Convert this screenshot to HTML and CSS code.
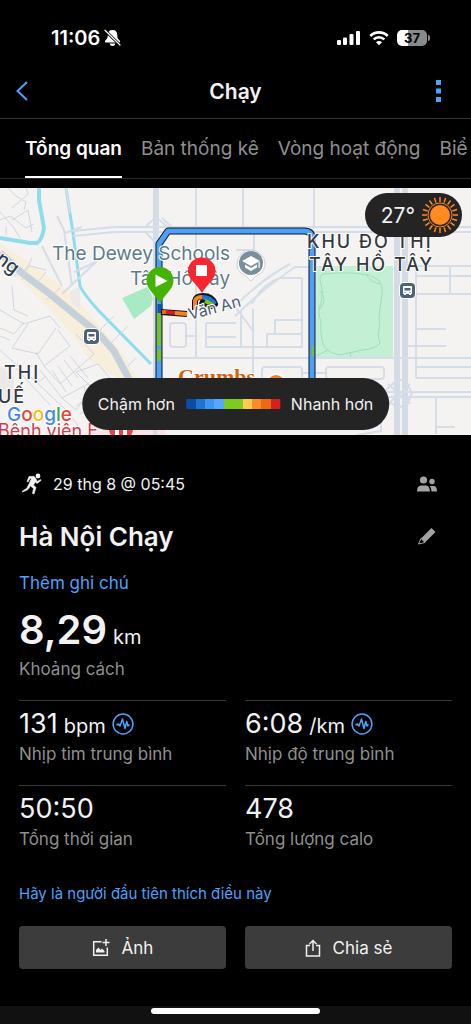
FILE: index.html
```html
<!DOCTYPE html>
<html lang="vi">
<head>
  <meta charset="UTF-8" />
  <meta name="viewport" content="width=device-width, initial-scale=1.0"/>
  <title>Chạy</title>
  <link rel="stylesheet" href="styles.css">
</head>
<body>

  <div class="statusbar">
    <div class="status-left">
      <span class="clock">11:06</span>
      <svg width="17" height="18" viewBox="0 0 17 18">
        <path d="M8.500 1c-3 0-4.700 2-4.700 4.600 0 4-1.300 4.900-2.800 6.400v1.400h15V12c-1.500-1.500-2.800-2.400-2.800-6.400C13.200 3 11.500 1 8.500 1z" fill="#fff"/>
        <path d="M5.800 14.500h5.400a2.700 2.500 0 0 1-5.400 0z" fill="#fff"/>
        <path d="M1 1.500L16 16" stroke="#000" stroke-width="3"/>
        <path d="M1 1.200L16 16" stroke="#fff" stroke-width="1.200" stroke-linecap="round"/>
      </svg>
    </div>
    <div class="status-right">
      <svg width="24" height="16" viewBox="0 0 24 16" fill="#fff">
        <rect x="0" y="10" width="4" height="5" rx="1"/>
        <rect x="6" y="7.500" width="4" height="7.500" rx="1"/>
        <rect x="12.500" y="4" width="4" height="11" rx="1"/>
        <rect x="19" y="1" width="4" height="14" rx="1"/>
      </svg>
      <svg width="20" height="16" viewBox="0 0 20 16" fill="none" stroke="#fff" stroke-width="2.600">
        <path d="M1.300 6a12.300 12.300 0 0 1 17.400 0"/>
        <path d="M4.700 9.400a7.500 7.500 0 0 1 10.600 0"/>
        <path d="M10 15.200L7 12.200a4.200 4.200 0 0 1 6 0z" fill="#fff" stroke="none"/>
      </svg>
      <span class="battery">37</span>
    </div>
  </div>

  <header class="topbar">
    <button class="icon-btn" aria-label="Quay lại">
      <svg width="12" height="20" viewBox="0 0 12 20" fill="none" stroke="#4ba3fb" stroke-width="2"><path d="M11 1L1.500 10L11 19"/></svg>
    </button>
    <h1>Chạy</h1>
    <button class="icon-btn" aria-label="Thêm">
      <svg width="5" height="22" viewBox="0 0 5 22" fill="#4ba3fb"><path d="M0 0h5v5H0zM0 8.500h5v5H0zM0 17h5v5H0z"/></svg>
    </button>
  </header>

  <nav class="tabs">
    <a href="#" class="active">Tổng quan</a>
    <a href="#">Bản thống kê</a>
    <a href="#">Vòng hoạt động</a>
    <a href="#">Biể</a>
  </nav>

  <div class="map">
    <svg class="map-canvas" viewBox="0 0 471 247" preserveAspectRatio="xMidYMid slice">
      <rect width="471" height="247" fill="#f5f3f2"/>

      <!-- built-up strip along the main road -->
      <path d="M0 55L28 74L60 97L80 115L96 134L122 164L137 190L130 196L112 187L90 172L72 146L50 122L20 92L0 78z" fill="#f7eedb"/>
      <path d="M70 103l10 -4v22l-8-6zM0 178l14 10v26H0z" fill="#ece9e8"/>
      <path d="M95 230l20-8 50 5v20H85z" fill="#f9e4e3"/>

      <!-- parks -->
      <path d="M316 78h77v91h-77z" fill="#c3f0d5"/>
      <path d="M122 110L147 99L153 110L151 118L134 131z" fill="#a8eac6"/>
      <g fill="none" stroke="#9fdcb9" stroke-width="1">
        <path d="M323 86q-5 2-2 10t0 18q-4 10 0 20q-1 15 3 24q5 7 16 9l22-5q14-1 18-7l-2-8q3-8 1-18l3-24q1-10-5-14l-8-4q-16-3-32-2z"/>
        <path d="M366 86q4 8 14 10M316 168l12-6M350 164l1 5M320 103q8 8 0 18"/>
      </g>

      <!-- water -->
      <g fill="none" stroke="#8fdcee" stroke-width="4">
        <path d="M39 0L39 12L44 40Q42 52 37 55L30 55L0 50"/>
        <path d="M66 0L73 45L80 98Q83 105 98 122L151 176" stroke-width="3"/>
      </g>

      <!-- wide roads -->
      <g fill="none" stroke="#d3dbe5">
        <path d="M155 0v247" stroke-width="4"/>
        <path d="M397 0v247M405 0v247" stroke-width="6"/>
        <path d="M0 65L22 85L50 106L73 125L98 145L114 163L129 191" stroke-width="7" stroke="#c6d0da"/>
      </g>
      <g fill="none" stroke="#d5dde8" stroke-width="2">
        <path d="M158 0v110M73 43L115 39H471M73 48L115 44H471"/>
        <path d="M196 0v46M243 0v40M314 0v40M254 42v20h-18M196 44v126"/>
        <path d="M145 39L156 29L170 41M145 44L156 55M162 30l10 9"/>
        <path d="M57 28L64 42L72 98M65 45L82 39M66 0L70 25M62 106l36-34M42 58L62 98M74 84l22-10"/>
        <path d="M235 128Q264 100 295 79H314M235 118Q262 91 290 76M302 90V159H235M302 90H280Q262 96 252 116M236 120L254 144M253 121v68M267 159V146h35M275 145V132h27M241 159V122"/>
        <path d="M160 170H471M170 138q0-3 3-3h10q3 0 3 3v18q0 3-3 3h-10q-3 0-3-3zM186 148h10M206 135h30M206 135v24h36M206 149h30"/>
        <path d="M262 190v-8q0-3 3-3h35q2 0 2 3v20M302 185h24M326 191v-9q0-3 3-3h52q3 0 3 3v6q0 3-3 3h-52q-3 0-3-3"/>
        <path d="M415 78H471M416 88H471M416 106H471M450 78v28M416 78v112M416 141h30M408 158h38M416 190h55M416 179h55"/>
        <path d="M385 203L397 192h8L412 205L408 214L399 220L385 211zM380 204h91M380 209h91M388 196l22 20M410 196l-22 20M436 210v36M436 239h19M355 242v-10M381 231v12l-24 4"/>
      </g>

      <!-- old quarter lanes -->
      <g fill="none" stroke="#ced6e2" stroke-width="1">
        <path d="M8 0L16 8L26 14L24 22M0 32L10 28L26 40L34 36M6 38L6 48M0 24L14 40L20 50M12 32L28 22L32 44M26 0l2 6L12 20"/>
        <path d="M14 88L30 78L46 82M22 92L32 70M36 96L46 84M60 100L46 112M0 122L24 136L50 128L60 140M12 98L14 122L28 128M28 136L12 160L38 166L56 140M0 140L14 146L24 134M0 148L10 152"/>
        <path d="M36 164L44 178L70 158L58 142M44 178L60 196L94 166L76 146M40 182L62 210L88 196L76 184L98 176M52 182l14 22M58 178l14 20M64 172l14 18M70 168l18 22M62 210l14 12L82 214M98 176L110 190M84 198l4 22M88 196l12 4-6 16"/>
        <path d="M0 162L20 180L32 190L66 222L80 240M14 178L50 217M36 196l10-8M76 218L98 204M80 226l22-14M96 146L114 128M110 156L128 138M124 182l12-12"/>
      </g>

      <!-- route -->
      <g fill="none" stroke-linejoin="round">
        <path d="M159 195V56L168 43H304Q312 43 312 50V195" stroke="#10151c" stroke-width="7"/>
        <path d="M159 195V56L168 43H304Q312 43 312 50V195" stroke="#4ba0fb" stroke-width="5"/>
        <path d="M159 125v48" stroke="#7bc31c" stroke-width="4"/>
        <path d="M159 158v3" stroke="#4ba0fb" stroke-width="4"/>
        <path d="M160 116v9" stroke="#0c55a8" stroke-width="5"/>
        <path d="M313 158v10" stroke="#7bc31c" stroke-width="2"/>
        <path d="M161 124L187 126" stroke="#10151c" stroke-width="6"/>
        <path d="M162 124L168 124" stroke="#ed6a0c" stroke-width="4"/>
        <path d="M166 124L176 125" stroke="#d5201f" stroke-width="4"/>
        <path d="M175 125L187 126" stroke="#f7821f" stroke-width="4"/>
        <path d="M195 122V113Q196 108 203 108Q212 108 215 116L211 118L200 113" stroke="#10151c" stroke-width="6"/>
        <path d="M195 122V113Q196 109 202 109" stroke="#f7821f" stroke-width="4"/>
        <path d="M202 109Q211 109 215 116" stroke="#1e76d2" stroke-width="4"/>
        <path d="M213 117L205 113" stroke="#7bc31c" stroke-width="4"/>
      </g>

      <!-- labels -->
      <g class="map-label poi">
        <text x="52" y="72">The Dewey Schools</text>
        <text x="130" y="97">Tây Hồ Tây</text>
      </g>
      <text class="map-label street" transform="translate(190 132) rotate(-15)">Văn An</text>
      <g class="map-label district">
        <text x="307" y="60">KHU ĐÔ THỊ</text>
        <text x="309" y="83">TÂY HỒ TÂY</text>
        <text x="4" y="191">THỊ</text>
        <text x="-2" y="215">UẾ</text>
      </g>
      <text class="map-label street big" transform="translate(-5 73) rotate(38)">ng</text>
      <text class="map-label shop" x="178" y="196">Crumbs</text>
      <text class="map-label hospital" x="-2" y="249">Bệnh viện E</text>
      <circle cx="276" cy="196" r="11" fill="#fff"/>
      <circle cx="276" cy="196" r="9" fill="#f5821f"/>
      <circle cx="121" cy="241" r="13" fill="#fff"/>
      <circle cx="121" cy="241" r="12" fill="#f43c4b"/>
      <path d="M115 236h4v11h-4zM123 236h4v11h-4z" fill="#fff"/>
      <text class="google" x="7" y="233"><tspan fill="#4285f4">G</tspan><tspan fill="#ea4335">o</tspan><tspan fill="#fbbc05">o</tspan><tspan fill="#4285f4">g</tspan><tspan fill="#34a853">l</tspan><tspan fill="#ea4335">e</tspan></text>

      <!-- school pin -->
      <path d="M251 62a14 14 0 0 1 14 14c0 7-5 10-9 12l-5 5-5-5c-4-2-9-5-9-12a14 14 0 0 1 14-14z" fill="#fff" stroke="#d0d0d0" stroke-width="1"/>
      <circle cx="251" cy="75" r="12" fill="#78909c"/>
      <path d="M251 68l9 5-9 5-9-5zM245 76.500l6 3.500 6-3.500v3l-6 3.500-6-3.500zM258.500 74h1.200v6h-1.200z" fill="#fff"/>

      <!-- bus stops -->
      <g id="bus">
        <rect x="83" y="140" width="17" height="17" rx="5" fill="#fff"/>
        <rect x="84" y="141" width="15" height="15" rx="4" fill="#4d6379"/>
        <path d="M88 144h7q1 0 1 1v7h-1v1h-2v-1h-3v1h-2v-1h-1v-7q0-1 1-1z" fill="#fff"/>
        <path d="M88.500 146h6v2.500h-6zM88.500 150h1v1h-1zM93.500 150h1v1h-1z" fill="#4d6379"/>
      </g>
      <use href="#bus" x="316" y="-46"/>

      <!-- start and finish pins -->
      <path d="M160 79a13.500 13.500 0 0 1 13.500 13.500C173.500 101 166 105 160 115C154 105 146.500 101 146.500 92.500A13.500 13.500 0 0 1 160 79z" fill="#44b306"/>
      <path d="M155.500 86.500L167.500 93L155.500 99z" fill="#fff"/>
      <path d="M202 69.500a13.500 13.500 0 0 1 13.500 13.500C215.500 91 208 95 202 105C196 95 188 91 188 83A13.500 13.500 0 0 1 202 69.500z" fill="#fb2530"/>
      <path d="M196 77h11v11h-11z" fill="#fff"/>
    </svg>

    <div class="weather">
      <span>27°</span>
      <svg width="38" height="38" viewBox="-19 -19 38 38">
        <g id="rays" stroke="#ff8a1f" stroke-width="1.500">
          <path id="ray" d="M0-13V-18"/>
          <use href="#ray" transform="rotate(18)"/>
          <use href="#ray" transform="rotate(36)"/>
          <use href="#ray" transform="rotate(54)"/>
          <use href="#ray" transform="rotate(72)"/>
        </g>
        <use href="#rays" transform="rotate(90)"/>
        <use href="#rays" transform="rotate(180)"/>
        <use href="#rays" transform="rotate(270)"/>
        <circle r="10" fill="#ff8a1f"/>
        <circle r="12" fill="none" stroke="#ff8a1f" stroke-width="1"/>
      </svg>
    </div>

    <div class="legend">
      <span>Chậm hơn</span>
      <div class="scale"></div>
      <span>Nhanh hơn</span>
    </div>
  </div>

  <main class="details">
    <div class="row meta">
      <svg width="22" height="22" viewBox="0 0 22 22">
        <circle cx="16" cy="3" r="2.400" fill="#f2f2f2"/>
        <path d="M7 3.500L12 3.300L13.500 5L15.300 8.500L18.500 6.500L19 7.500L15 10.500L13.300 9L11.500 12L14 14.500L12 21L10.500 20.500L11.500 15.500L8.200 12.800Q7.200 16 5.200 17L.500 19L.200 18.200L4.800 15.200L7.200 10.500L9.500 5.500H8L6 9L5 8.500z" fill="#f2f2f2" stroke="#f2f2f2" stroke-width=".6" stroke-linejoin="round"/>
      </svg>
      <span class="date">29 thg 8 @ 05:45</span>
      <button class="icon-btn" aria-label="Quyền riêng tư">
        <svg width="20" height="16" viewBox="0 0 20 16" fill="#a3a3a3">
          <circle cx="6.500" cy="4" r="3.600"/>
          <circle cx="15" cy="5.500" r="2.700"/>
          <path d="M0 15.500Q0 9.500 4 9.500H9Q12.500 9.500 13 15.500zM12.800 10h4Q20 10 20 15.500h-5.500Q14.500 12 12.800 10z"/>
        </svg>
      </button>
    </div>

    <div class="row title">
      <h2>Hà Nội Chạy</h2>
      <button class="icon-btn" aria-label="Sửa tên">
        <svg width="20" height="18" viewBox="0 0 20 18">
          <path d="M14.500 1L18.500 5L8 15.500L4 11.500z" fill="#a3a3a3"/>
          <path d="M4 11.500L8 15.500L1.500 17z" fill="none" stroke="#a3a3a3" stroke-width="1"/>
        </svg>
      </button>
    </div>

    <a href="#" class="note">Thêm ghi chú</a>

    <div class="distance">
      <div class="value">8,29 <small>km</small></div>
      <div class="label">Khoảng cách</div>
    </div>

    <div class="stats">
      <div class="stat">
        <div class="value">131 <small>bpm</small>
          <svg id="pulse" width="22" height="22" viewBox="0 0 22 22" fill="none" stroke="#4ba3fb">
            <circle cx="11" cy="11" r="9.900" stroke-width="1.500"/>
            <path d="M4.500 12L6.500 11L8 13L10.500 6L13 15.500L14.800 8.500L16 13L17.500 11.500" stroke-width="1.500" stroke-linejoin="round"/>
          </svg>
        </div>
        <div class="label">Nhịp tim trung bình</div>
      </div>
      <div class="stat">
        <div class="value">6:08 <small>/km</small>
          <svg width="22" height="22" viewBox="0 0 22 22"><use href="#pulse"/></svg>
        </div>
        <div class="label">Nhịp độ trung bình</div>
      </div>
      <div class="stat">
        <div class="value">50:50</div>
        <div class="label">Tổng thời gian</div>
      </div>
      <div class="stat">
        <div class="value">478</div>
        <div class="label">Tổng lượng calo</div>
      </div>
    </div>

    <a href="#" class="like">Hãy là người đầu tiên thích điều này</a>

    <div class="actions">
      <button>
        <svg width="18" height="18" viewBox="0 0 18 18" fill="none" stroke="#f0f0f0" stroke-width="1.500">
          <path d="M9.500 2.700H1.700V16.300H15.300V8.500M14 0V7M10.500 3.500H17.500"/>
          <path d="M4 13.500V11L6.500 8.500L8.500 11L10 9.500L12.500 12V13.500z" fill="#f0f0f0" stroke="none"/>
        </svg>
        Ảnh
      </button>
      <button>
        <svg width="16" height="18" viewBox="0 0 16 18" fill="none" stroke="#f0f0f0" stroke-width="1.500">
          <path d="M5 6.500H1.500V17H14.500V6.500H11M8 12V1.500M4.500 5L8 1.500L11.500 5"/>
        </svg>
        Chia sẻ
      </button>
    </div>
  </main>

  <div class="homebar"><span></span></div>

</body>
</html>
```
FILE: styles.css
```css
* {
  box-sizing: border-box;
}

body {
  font-family: Inter, "Liberation Sans", sans-serif;
  margin: 0;
  min-height: 100vh;
  display: flex;
  flex-direction: column;
  background-color: #000;
  color: #f2f2f2;
  overflow-x: hidden;
}

a {
  color: #4ba3fb;
  text-decoration: none;
}

button {
  font-family: inherit;
  color: inherit;
  border: none;
  cursor: pointer;
}

svg {
  flex: none;
}

.statusbar {
  display: flex;
  justify-content: space-between;
  align-items: center;
  padding: 12px 44px 0 51px;
  height: 64px;
}

.status-left, .status-right {
  display: flex;
  align-items: center;
}

.status-left {
  gap: 4px;
}

.status-right {
  gap: 8px;
}

.clock {
  font-size: 20px;
  font-weight: 600;
  color: #fff;
}

.battery {
  position: relative;
  width: 30px;
  height: 16px;
  border-radius: 5px;
  background: linear-gradient(to right, #fff 37%, #8a8a8a 37%);
  color: #000;
  font-size: 13px;
  font-weight: 700;
  line-height: 16px;
  text-align: center;
}

.battery::after {
  content: "";
  position: absolute;
  right: -3px;
  top: 5px;
  width: 2px;
  height: 6px;
  border-radius: 0 2px 2px 0;
  background-color: #8a8a8a;
}

.icon-btn {
  display: flex;
  background: none;
  padding: 0;
}

.topbar {
  display: grid;
  grid-template-columns: 1fr auto 1fr;
  align-items: center;
  height: 54px;
  padding: 0 16px;
}

.topbar h1 {
  margin: 0;
  font-size: 21px;
  font-weight: 600;
}

.topbar .icon-btn:last-child {
  justify-self: end;
  padding-right: 14px;
}

.tabs {
  display: flex;
  gap: 19px;
  height: 61px;
  padding-left: 25px;
  border-top: 1px solid #333;
  border-bottom: 1px solid #2b2b2b;
  overflow: hidden;
  white-space: nowrap;
}

.tabs a {
  flex: none;
  color: #8f8f8f;
  font-size: 19px;
  line-height: 59px;
}

.tabs .active {
  color: #fff;
  font-weight: 600;
  box-shadow: inset 0 -2px #fff;
}

.map {
  position: relative;
  margin-top: 9px;
}

.map-canvas {
  display: block;
  width: 100%;
}

.map-label {
  paint-order: stroke;
  stroke: #fff;
  stroke-width: 2px;
  stroke-linejoin: round;
}

.poi {
  font-size: 19px;
  fill: #5e7b88;
}

.district {
  font-size: 18px;
  font-weight: 500;
  letter-spacing: 2px;
  fill: #33383e;
}

.street {
  font-size: 16px;
  fill: #4a5c72;
}

.street.big {
  font-size: 19px;
  font-weight: 500;
  fill: #2f3c4c;
}

.shop {
  font-family: "Liberation Serif", serif;
  font-size: 22px;
  font-weight: 700;
  fill: #d86208;
}

.hospital {
  font-size: 18px;
  fill: #d8384a;
}

.google {
  font-size: 19px;
  font-weight: 500;
  paint-order: stroke;
  stroke: #fff;
  stroke-width: 2px;
}

.weather {
  position: absolute;
  top: 5px;
  right: 9px;
  display: flex;
  align-items: center;
  gap: 6px;
  height: 44px;
  padding: 0 3px 0 16px;
  border-radius: 22px;
  background-color: #242424;
  font-size: 21px;
}

.legend {
  position: absolute;
  bottom: 5px;
  left: 50%;
  transform: translateX(-50%);
  display: flex;
  align-items: center;
  gap: 11px;
  height: 52px;
  padding: 0 16px;
  border-radius: 26px;
  background-color: #242424;
  font-size: 16px;
  white-space: nowrap;
}

.scale {
  width: 94px;
  height: 10px;
  background: linear-gradient(to right,
    #0a4da2 10%, #1976d2 10% 20%, #3d95f5 20% 30%, #55a8ff 30% 40%,
    #7fca1e 40% 60%, #ffca4d 60% 70%, #fb8c28 70% 80%, #ee6a10 80% 90%, #d81f20 90%);
}

.details {
  display: flex;
  flex-direction: column;
  padding: 36px 19px 0;
}

.row {
  display: flex;
  align-items: center;
  padding-right: 15px;
}

.row .icon-btn {
  margin-left: auto;
}

.meta {
  height: 26px;
  padding-left: 3px;
  gap: 9px;
}

.date {
  font-size: 16px;
}

.title {
  margin-top: 20px;
  height: 38px;
}

.title h2 {
  margin: 0;
  font-size: 26px;
  font-weight: 600;
}

.note {
  margin-top: 16px;
  font-size: 17px;
  line-height: 24px;
}

.distance {
  height: 105px;
  padding-top: 10px;
}

.value {
  display: flex;
  align-items: baseline;
  gap: 6px;
  height: 36px;
  font-size: 27px;
  line-height: 36px;
}

.value small {
  font-size: 20px;
}

.value svg {
  align-self: center;
}

.distance .value {
  height: 52px;
  font-size: 40px;
  font-weight: 600;
  line-height: 50px;
}

.distance small {
  font-weight: 400;
}

.label {
  color: #8f8f8f;
  font-size: 17px;
  line-height: 24px;
}

.stats {
  display: grid;
  grid-template-columns: 1fr 1fr;
  column-gap: 19px;
}

.stat {
  height: 85px;
  padding-top: 5px;
  border-top: 1px solid #383838;
}

.like {
  margin-top: 12px;
  font-size: 15px;
  line-height: 24px;
}

.actions {
  display: grid;
  grid-template-columns: 1fr 1fr;
  gap: 19px;
  margin-top: 20px;
}

.actions button {
  display: flex;
  justify-content: center;
  align-items: center;
  gap: 12px;
  height: 43px;
  border-radius: 4px;
  background-color: #3c3c3c;
  font-size: 17px;
}

.homebar {
  display: flex;
  justify-content: center;
  margin-top: auto;
  height: 18px;
  padding-top: 2px;
  background-color: #111;
}

.homebar span {
  width: 36%;
  height: 6px;
  border-radius: 3px;
  background-color: #fff;
}
```
